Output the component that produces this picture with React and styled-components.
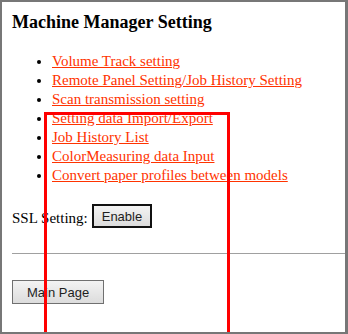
import React from "react";
import styled, { createGlobalStyle } from "styled-components";

const Global = createGlobalStyle`
  html, body { margin: 0; padding: 0; background: #fff; }
  body { font-family: "Liberation Serif", "Times New Roman", serif; }
`;

const Frame = styled.div`
  position: relative;
  box-sizing: border-box;
  width: 348px;
  height: 334px;
  overflow: hidden;
  border-style: solid;
  border-color: #777777;
  border-width: 2px 3px 2px 2px;
  padding: 9px 0 0 10px;
  display: flex;
  flex-direction: column;
`;

const Title = styled.h3`
  margin: 0;
  font-size: 18px;
  line-height: 22px;
  font-weight: bold;
  color: #000;
`;

const Menu = styled.ul`
  margin: 19px 0 0 0;
  padding-left: 40px;
  list-style: disc;
  font-size: 15px;
  line-height: 19px;
`;

const MenuItem = styled.li`
  color: #000;
`;

const MenuLink = styled.a`
  color: #ff3300;
  text-decoration: underline;
`;

const SslRow = styled.div`
  margin-top: 19px;
  display: flex;
  align-items: flex-start;
  gap: 4px;
`;

const Label = styled.span`
  margin-top: 5px;
  font-size: 15px;
  line-height: 19px;
  color: #000;
`;

const Button = styled.button`
  box-sizing: border-box;
  height: 24px;
  margin: 0;
  padding: 0 ${(p) => p.$pad}px;
  font-family: Arial, "Liberation Sans", sans-serif;
  font-size: 13px;
  color: #1e1e1e;
  background: linear-gradient(#f3f3f3, #dcdcdc);
  border: ${(p) => (p.$primary ? "2px solid #111" : "1px solid #707070")};
  border-radius: 0;
  display: inline-flex;
  align-items: center;
  justify-content: center;
`;

const Rule = styled.hr`
  margin: 25px 0 0 0;
  border: 0;
  height: 1px;
  background: #a0a0a0;
`;

const Footer = styled.div`
  margin-top: 26px;
  display: flex;
`;

const Highlight = styled.div`
  position: absolute;
  left: 42px;
  top: 110px;
  width: 186px;
  bottom: 0;
  box-sizing: border-box;
  border: 3px solid #ff0000;
  border-bottom: 0;
  pointer-events: none;
`;

const items = [
  "Volume Track setting",
  "Remote Panel Setting/Job History Setting",
  "Scan transmission setting",
  "Setting data Import/Export",
  "Job History List",
  "ColorMeasuring data Input",
  "Convert paper profiles between models",
];

export default function App() {
  return (
    <>
      <Global />
      <Frame>
        <Title>Machine Manager Setting</Title>
        <Menu>
          {items.map((t) => (
            <MenuItem key={t}>
              <MenuLink href="#">{t}</MenuLink>
            </MenuItem>
          ))}
        </Menu>
        <SslRow>
          <Label>SSL Setting:</Label>
          <Button $primary $pad={8}>Enable</Button>
        </SslRow>
        <Rule />
        <Footer>
          <Button $pad={14}>Main Page</Button>
        </Footer>
        <Highlight />
      </Frame>
    </>
  );
}
